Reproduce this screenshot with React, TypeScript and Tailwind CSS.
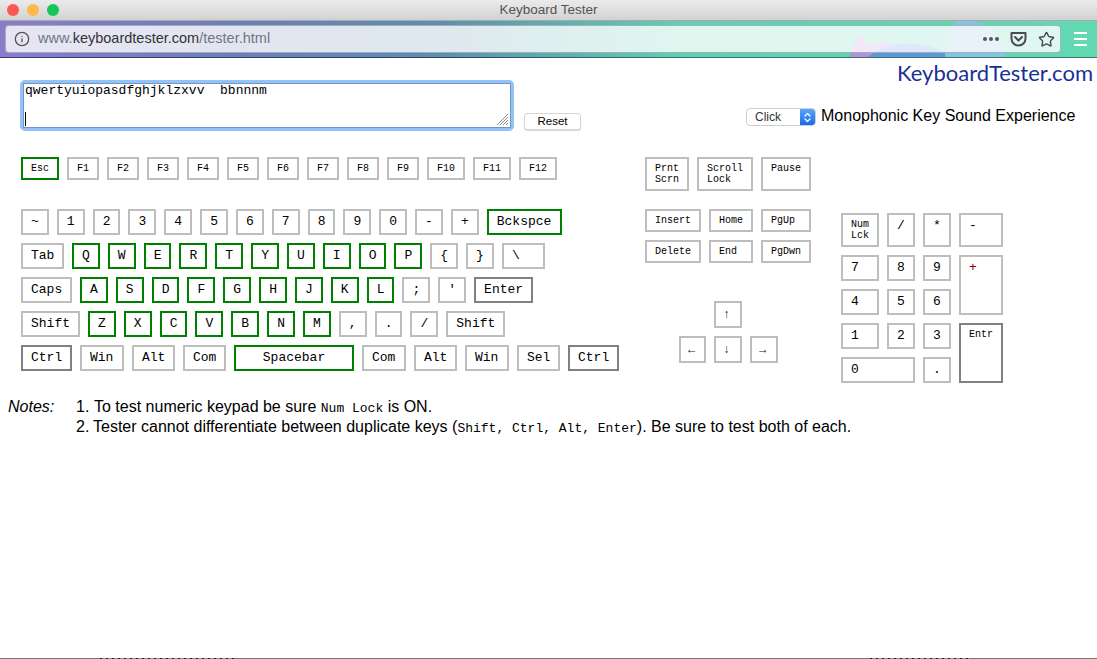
import React from "react";
import { Info, Star } from "lucide-react";

type Tone = "gray" | "green" | "dark";

interface KeyProps {
  label: React.ReactNode;
  w?: string;
  h?: string;
  tone?: Tone;
  small?: boolean;
  center?: boolean;
  color?: string;
}

const toneClass: Record<Tone, string> = {
  gray: "border-[#bebebe]",
  green: "border-[#008000]",
  dark: "border-[#808080]",
};

const Key: React.FC<KeyProps> = ({ label, w = "w-[27.83px]", h = "h-[26px]", tone = "gray", small, center, color = "text-black" }) => (
  <div
    className={`${w} ${h} ${toneClass[tone]} ${color} shrink-0 overflow-hidden whitespace-pre border-2 bg-white font-['Liberation_Mono',monospace] ${
      small ? "pt-[4px] text-[10px] leading-[11px]" : "pt-[2px] text-[13px] leading-[17px]"
    } ${center ? "text-center" : "pl-[8px]"}`}
  >
    {label}
  </div>
);

const Arrow: React.FC<{ label: string; w?: string }> = ({ label, w = "w-[28px]" }) => (
  <div className={`${w} h-[27px] shrink-0 border-2 border-[#bebebe] bg-white pl-[7px] pt-[4px] font-['Liberation_Mono',monospace] text-[12px] leading-[17px] text-[#222]`}>
    {label}
  </div>
);

const Row: React.FC<{ children: React.ReactNode }> = ({ children }) => <div className="flex gap-2">{children}</div>;

const letters = (s: string, tone: Tone = "green") => s.split("").map((c, i) => <Key key={i} label={c} tone={tone} />);

const MainKeys = () => (
  <div className="flex w-[598px] shrink-0 flex-col">
    <Row>
      <Key label="Esc" w="w-[38px]" h="h-[23px]" tone="green" small />
      {["F1", "F2", "F3", "F4", "F5", "F6", "F7", "F8", "F9"].map((f) => (
        <Key key={f} label={f} w="w-[32px]" h="h-[23px]" small />
      ))}
      {["F10", "F11", "F12"].map((f) => (
        <Key key={f} label={f} w="w-[38px]" h="h-[23px]" small />
      ))}
    </Row>
    <div className="mt-[29px] flex flex-col gap-2">
      <Row>
        {letters("~1234567890-+", "gray")}
        <Key label="Bckspce" w="w-[75px]" tone="green" />
      </Row>
      <Row>
        <Key label="Tab" w="w-[43px]" />
        {letters("QWERTYUIOP")}
        {letters("{}", "gray")}
        <Key label="\" w="w-[43px]" />
      </Row>
      <Row>
        <Key label="Caps" w="w-[51px]" />
        {letters("ASDFGHJKL")}
        {letters(";'", "gray")}
        <Key label="Enter" w="w-[59px]" tone="dark" />
      </Row>
      <Row>
        <Key label="Shift" w="w-[59px]" />
        {letters("ZXCVBNM")}
        {letters(",./", "gray")}
        <Key label="Shift" w="w-[59px]" />
      </Row>
      <Row>
        <Key label="Ctrl" w="w-[51px]" tone="dark" />
        <Key label="Win" w="w-[44px]" />
        <Key label="Alt" w="w-[43px]" />
        <Key label="Com" w="w-[43px]" />
        <Key label="Spacebar" w="w-[120px]" tone="green" center />
        <Key label="Com" w="w-[44px]" />
        <Key label="Alt" w="w-[43px]" />
        <Key label="Win" w="w-[44px]" />
        <Key label="Sel" w="w-[43px]" />
        <Key label="Ctrl" w="w-[51px]" tone="dark" />
      </Row>
    </div>
  </div>
);

const NavKeys = () => (
  <div className="ml-[26px] flex w-[166px] shrink-0 flex-col">
    <Row>
      <Key label={"Prnt\nScrn"} w="w-[44px]" h="h-[34px]" small />
      <Key label={"Scroll\nLock"} w="w-[56px]" h="h-[34px]" small />
      <Key label="Pause" w="w-[50px]" h="h-[34px]" small />
    </Row>
    <div className="mt-[18px] flex flex-col gap-2">
      <Row>
        <Key label="Insert" w="w-[56px]" h="h-[23px]" small />
        <Key label="Home" w="w-[44px]" h="h-[23px]" small />
        <Key label="PgUp" w="w-[50px]" h="h-[23px]" small />
      </Row>
      <Row>
        <Key label="Delete" w="w-[56px]" h="h-[23px]" small />
        <Key label="End" w="w-[44px]" h="h-[23px]" small />
        <Key label="PgDwn" w="w-[50px]" h="h-[23px]" small />
      </Row>
    </div>
    <div className="mt-[38px] flex flex-col gap-2 pl-[34px]">
      <div className="pl-[35px]">
        <Arrow label="↑" />
      </div>
      <Row>
        <Arrow label="←" w="w-[27px]" />
        <Arrow label="↓" />
        <Arrow label="→" />
      </Row>
    </div>
  </div>
);

const NumPad = () => (
  <div className="ml-[30px] grid shrink-0 grid-cols-[38px_28px_28px_44px] grid-rows-[34px_26px_26px_26px_26px] gap-2 pt-[56px]">
    <Key label={"Num\nLck"} w="w-full" h="h-full" small />
    <Key label="/" w="w-full" h="h-full" />
    <Key label="*" w="w-full" h="h-full" />
    <Key label="-" w="w-full" h="h-full" />
    <Key label="7" w="w-full" h="h-full" />
    <Key label="8" w="w-full" h="h-full" />
    <Key label="9" w="w-full" h="h-full" />
    <div className="row-span-2">
      <Key label="+" w="w-full" h="h-full" color="text-[#8a0000]" />
    </div>
    <Key label="4" w="w-full" h="h-full" />
    <Key label="5" w="w-full" h="h-full" />
    <Key label="6" w="w-full" h="h-full" />
    <Key label="1" w="w-full" h="h-full" />
    <Key label="2" w="w-full" h="h-full" />
    <Key label="3" w="w-full" h="h-full" />
    <div className="row-span-2">
      <Key label="Entr" w="w-full" h="h-full" tone="dark" small />
    </div>
    <div className="col-span-2">
      <Key label="0" w="w-full" h="h-full" />
    </div>
    <Key label="." w="w-full" h="h-full" />
  </div>
);

const Mono: React.FC<{ children: React.ReactNode }> = ({ children }) => (
  <span className="font-['Liberation_Mono',monospace] text-[13px] leading-none">{children}</span>
);

const Notes = () => (
  <div className="mt-[14px] flex pl-[8px] font-['Liberation_Sans',sans-serif] text-[16px] leading-[20px] text-black">
    <div className="w-[68px] shrink-0 italic">Notes:</div>
    <div className="flex flex-col">
      <div className="flex">
        <span className="w-[18px] shrink-0">1.</span>
        <span>
          To test numeric keypad be sure <Mono>Num Lock</Mono> is ON.
        </span>
      </div>
      <div className="flex">
        <span className="w-[17px] shrink-0">2.</span>
        <span>
          Tester cannot differentiate between duplicate keys (<Mono>Shift, Ctrl, Alt, Enter</Mono>). Be sure to test both of each.
        </span>
      </div>
    </div>
  </div>
);

const TitleBar = () => (
  <div className="flex h-[21px] shrink-0 items-center border-b border-[#a9a9a9] bg-[linear-gradient(#ebebeb,#d2d2d2)]">
    <div className="flex gap-2 pl-[7px]">
      <span className="h-3 w-3 rounded-full bg-[#fc5753]" />
      <span className="h-3 w-3 rounded-full bg-[#fdb84a]" />
      <span className="h-3 w-3 rounded-full bg-[#14c656]" />
    </div>
    <div className="flex-1 pr-[59px] text-center font-['Liberation_Sans',sans-serif] text-[13.5px] leading-[20px] text-[#555]">Keyboard Tester</div>
  </div>
);

const Toolbar = () => (
  <div className="relative shrink-0">
    <div className="flex h-[36px] items-center bg-[linear-gradient(90deg,#897dc9_0%,#6c7fb6_22%,#5f8fae_40%,#5fd0b0_62%,#62d9b3_100%)] pl-[5px] pr-[10px]">
      {/* theme artwork behind the translucent url field */}
      <svg className="absolute left-0 top-0 h-[36px] w-[1097px]" viewBox="0 0 1097 36">
        <path d="M850 36 Q852 22 860 12 L868 24 Q880 20 895 22 L880 36 Z" fill="#b78fe0" />
        <path d="M868 36 Q890 18 925 24 Q945 30 950 36 Z" fill="#5f95dc" />
        <path d="M945 36 Q945 12 957 0 L975 0 Q1010 20 1005 36 Z" fill="#86c4e0" />
      </svg>
      <div className="relative flex h-[28px] w-[1056px] items-center rounded-[4px] border border-[#5f6f88]/50 bg-white/80 pl-[8px]">
        <Info size={16} strokeWidth={2} className="text-[#555]" />
        <div className="ml-[8px] font-['Liberation_Sans',sans-serif] text-[14.5px] text-[#6f7681]">
          www.<span className="text-[#333]">keyboardtester.com</span>/tester.html
        </div>
        <div className="ml-auto flex items-center pr-[5px]">
          <div className="flex gap-[2px]">
            <span className="h-[4px] w-[4px] rounded-full bg-[#555]" />
            <span className="h-[4px] w-[4px] rounded-full bg-[#555]" />
            <span className="h-[4px] w-[4px] rounded-full bg-[#555]" />
          </div>
          <svg className="ml-[11px]" width="17" height="16" viewBox="0 0 17 16" fill="none" stroke="#4a4a4f" strokeWidth="2">
            <path d="M1.5 2 H15.5 V7.5 A7 7 0 0 1 1.5 7.5 Z" strokeLinejoin="round" />
            <path d="M5 6 L8.5 9.5 L12 6" strokeLinecap="round" strokeLinejoin="round" />
          </svg>
          <Star size={17} strokeWidth={2} className="ml-[11px] text-[#4a4a4f]" />
        </div>
      </div>
      <div className="relative ml-auto flex w-[13px] flex-col gap-[4px]">
        <span className="h-[2px] bg-white" />
        <span className="h-[2px] bg-white" />
        <span className="h-[2px] bg-white" />
      </div>
    </div>
    <div className="h-px bg-[linear-gradient(90deg,#3f3a80,#24486c_40%,#2f7d6a_65%,#2f7d6a)]" />
  </div>
);

const TextBox = () => (
  <div className="-ml-px h-[51px] w-[494px] shrink-0 rounded-[5px] border-[3px] border-[#96c1f6]">
    <div className="relative h-full border border-[#6c98cc] bg-white pl-[1px] font-['Liberation_Mono',monospace] text-[13px] leading-[13px] text-black">
      <div className="whitespace-pre">qwertyuiopasdfghjklzxvv  bbnnnm</div>
      <div className="mt-[15px] h-[14px] w-px bg-black" />
      <svg className="absolute bottom-[1px] right-[1px]" width="13" height="13" viewBox="0 0 13 13" stroke="#8a8a8a" strokeWidth="1">
        <path d="M1 12 L12 1 M4 12 L12 4 M7 12 L12 7 M10 12 L12 10" />
      </svg>
    </div>
  </div>
);

const SoundSelect = () => (
  <div className="mb-[5px] ml-[165px] flex h-[18px] w-[70px] shrink-0 overflow-hidden rounded-[4px] border border-[#cfcfcf] bg-white font-['Liberation_Sans',sans-serif] text-[12px] leading-[17px] text-[#333]">
    <div className="flex-1 pl-[8px]">Click</div>
    <div className="flex w-[15px] items-center justify-center bg-[linear-gradient(#5aa6fb,#1668ee)]">
      <svg width="9" height="13" viewBox="0 0 9 13" fill="none" stroke="white" strokeWidth="1.3" strokeLinecap="round" strokeLinejoin="round">
        <path d="M2 5 L4.5 2.5 L7 5 M2 8 L4.5 10.5 L7 8" />
      </svg>
    </div>
  </div>
);

export default function App() {
  return (
    <div className="flex h-[659px] w-[1097px] flex-col overflow-hidden bg-white">
      <TitleBar />
      <Toolbar />
      <main className="flex flex-1 flex-col">
        <div className="mt-[4px] h-[18px] pr-[4px] text-right font-['Lato',sans-serif] text-[22px] leading-[22px] text-[#1a2f96]">KeyboardTester.com</div>
        <div className="flex items-end pl-[21px]">
          <TextBox />
          <button className="mb-[1px] ml-[10px] h-[17px] w-[57px] shrink-0 rounded-[3px] border border-[#d5d5d5] bg-white font-['Liberation_Sans',sans-serif] text-[11.5px] leading-[15px] text-black shadow-[0_1px_1px_rgba(0,0,0,0.15)]">
            Reset
          </button>
          <SoundSelect />
          <div className="mb-[5px] ml-[5px] font-['Liberation_Sans',sans-serif] text-[16px] leading-[20px] text-black">Monophonic Key Sound Experience</div>
        </div>
        <div className="mt-[26px] flex pl-[21px]">
          <MainKeys />
          <NavKeys />
          <NumPad />
        </div>
        <Notes />
        <div className="mt-auto flex h-px bg-[#777]">
          <div className="ml-[100px] h-px w-[135px] bg-[repeating-linear-gradient(90deg,#222_0,#222_2px,#888_2px,#888_6px)]" />
          <div className="ml-[635px] h-px w-[100px] bg-[repeating-linear-gradient(90deg,#222_0,#222_2px,#888_2px,#888_6px)]" />
        </div>
      </main>
    </div>
  );
}
